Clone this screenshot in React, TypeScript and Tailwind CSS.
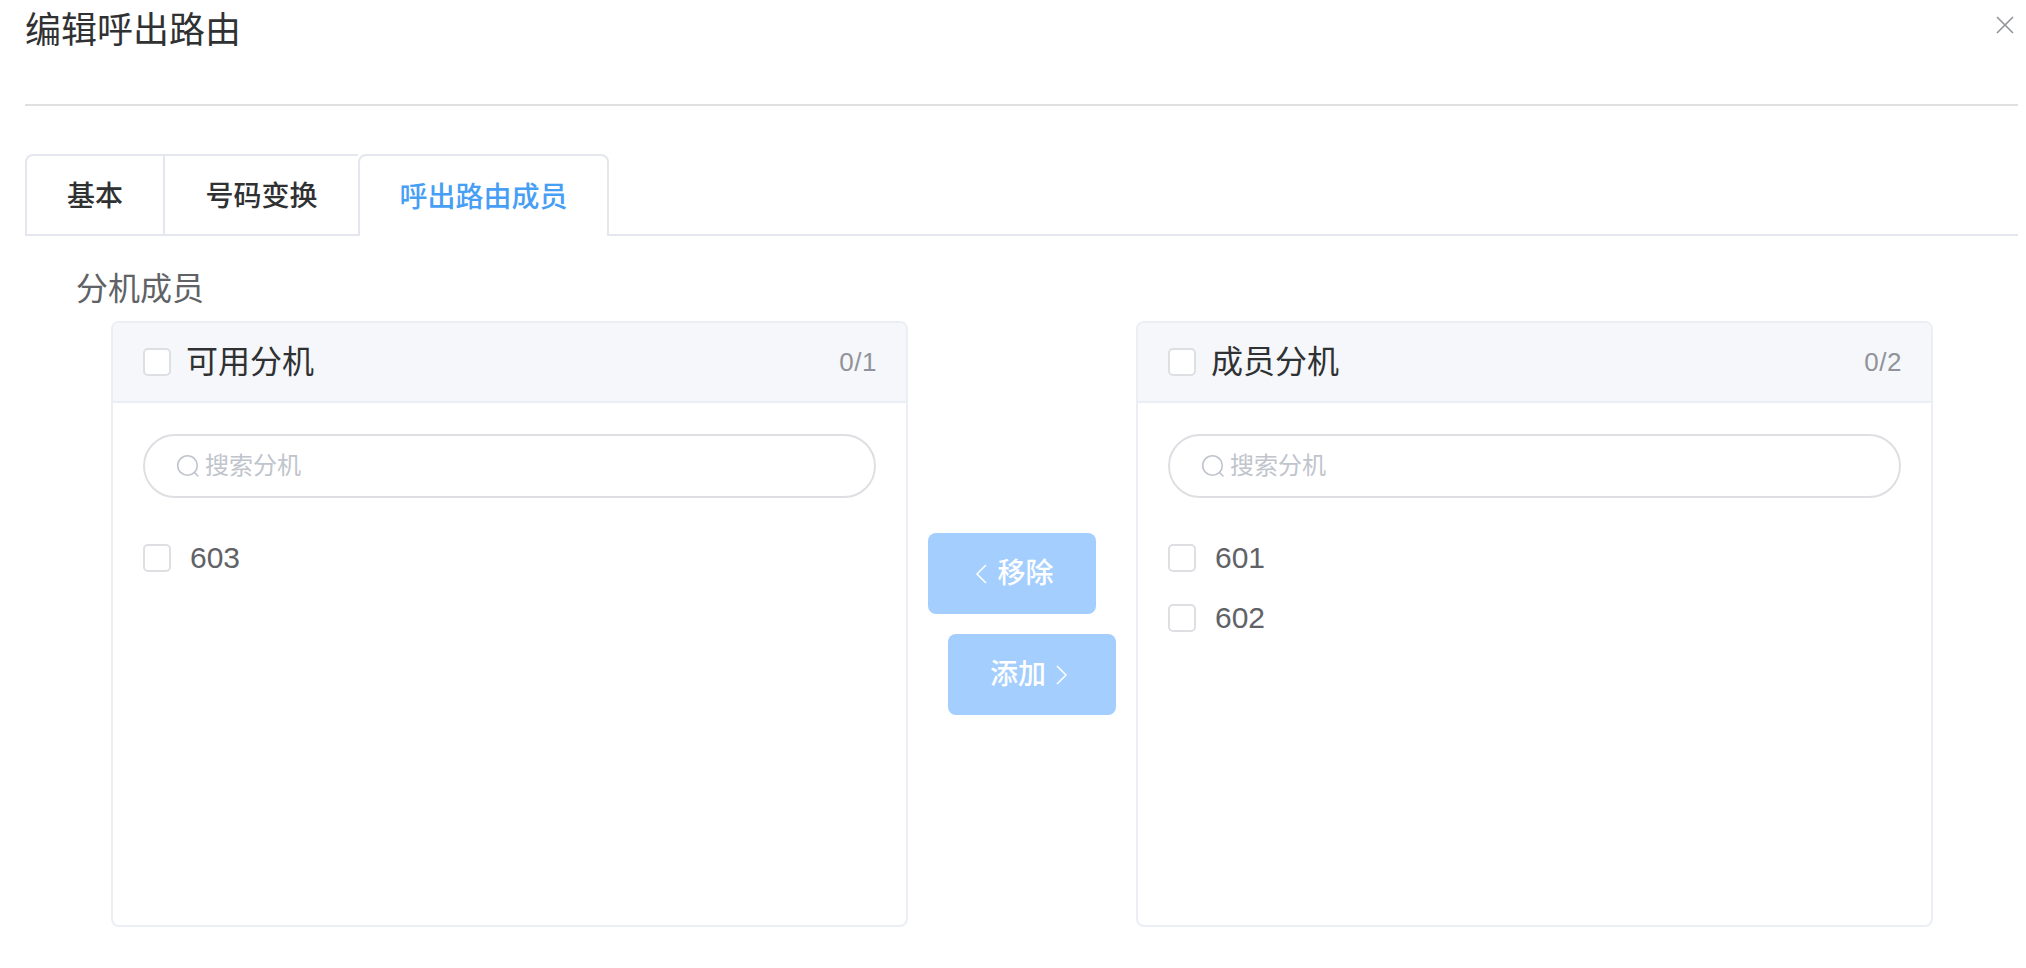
import React from "react";

const FONT = "[font-family:'Liberation_Sans','Noto_Sans_CJK_SC',sans-serif]";

function Box() {
  return <span className="block w-[28px] h-[28px] shrink-0 rounded-[5px] border-2 border-[#dddfe3] bg-white" />;
}

function SearchIcon() {
  return (
    <svg width="24" height="24" viewBox="0 0 24 24" fill="none" stroke="#c0c4cc" strokeWidth="1.6" className="shrink-0">
      <circle cx="11.5" cy="11.5" r="9.8" />
      <path d="M18.6 18.6 L22 22" strokeLinecap="round" />
    </svg>
  );
}

function Chevron({ dir }: { dir: "left" | "right" }) {
  return (
    <svg width="12" height="20" viewBox="0 0 12 20" fill="none" stroke="#ffffff" strokeWidth="1.5" className="shrink-0">
      <path d={dir === "left" ? "M11 1 L2 10 L11 19" : "M1 1 L10 10 L1 19"} />
    </svg>
  );
}

function Panel({ title, count, items }: { title: string; count: string; items: string[] }) {
  return (
    <div className="w-[797px] h-[606px] shrink-0 rounded-[8px] border-2 border-[#ebeef5] overflow-hidden bg-white">
      <div className="h-[80px] flex items-center px-[30px] bg-[#f5f7fa] border-b-2 border-[#ebeef5]">
        <Box />
        <span className="ml-[15px] text-[32px] leading-[40px] text-[#303133]">{title}</span>
        <span className="ml-auto -mr-[1px] text-[26px] leading-[32px] tracking-[0.5px] text-[#909399]">{count}</span>
      </div>
      <div className="px-[30px] pt-[31px]">
        <div className="h-[64px] rounded-full border-2 border-[#dddfe3] flex items-center pl-[31px] pr-[20px] gap-[5px]">
          <SearchIcon />
          <input
            readOnly
            placeholder="搜索分机"
            className="flex-1 min-w-0 text-[24px] leading-[32px] outline-none placeholder:text-[#c0c4cc] bg-transparent"
          />
        </div>
        <div className="mt-[30px] flex flex-col">
          {items.map((it) => (
            <div key={it} className="h-[60px] flex items-center gap-[19px]">
              <Box />
              <span className="text-[30px] leading-[40px] text-[#606266]">{it}</span>
            </div>
          ))}
        </div>
      </div>
    </div>
  );
}

export default function App() {
  return (
    <div className={`relative w-[2026px] h-[968px] overflow-hidden bg-white ${FONT}`}>
      <div className="ml-[25px] mr-[8px] h-[106px] border-b-2 border-[#e0e0e0]">
        <h1 className="pt-[7px] text-[36px] leading-[48px] font-normal text-[#303133]">编辑呼出路由</h1>
      </div>
      <svg width="18" height="18" viewBox="0 0 18 18" fill="none" stroke="#909399" strokeWidth="1.6" className="absolute left-[1996px] top-[16px]">
        <path d="M1 1 L17 17 M17 1 L1 17" />
      </svg>

      <div className="ml-[25px] mr-[8px] mt-[48px] h-[82px] flex border-b-2 border-[#e4e7ed]">
        <div className="w-[138px] h-[80px] pt-[3px] rounded-tl-[8px] border-l-2 border-t-2 border-[#e4e7ed] flex items-center justify-center text-[28px] font-medium text-[#303133]">基本</div>
        <div className="w-[195px] h-[80px] pt-[3px] border-l-2 border-t-2 border-[#e4e7ed] flex items-center justify-center text-[28px] font-medium text-[#303133]">号码变换</div>
        <div className="w-[251px] h-[82px] pt-[3px] rounded-t-[8px] border-x-2 border-t-2 border-[#e4e7ed] bg-white flex items-center justify-center text-[28px] font-medium text-[#479ef5]">呼出路由成员</div>
      </div>

      <div className="ml-[76px] mt-[31px] text-[32px] leading-[44px] text-[#606266]">分机成员</div>

      <div className="ml-[111px] mt-[10px] flex">
        <Panel title="可用分机" count="0/1" items={["603"]} />
        <div className="w-[228px] shrink-0 pl-[20px] pt-[212px] flex flex-col gap-[20px]">
          <div className="w-[168px] h-[81px] pl-[5px] rounded-[8px] bg-[#a3cefd] flex items-center justify-center gap-[10px] text-[28px] font-medium text-white">
            <Chevron dir="left" />
            <span>移除</span>
          </div>
          <div className="ml-[20px] w-[168px] h-[81px] pr-[6px] rounded-[8px] bg-[#a3cefd] flex items-center justify-center gap-[10px] text-[28px] font-medium text-white">
            <span>添加</span>
            <Chevron dir="right" />
          </div>
        </div>
        <Panel title="成员分机" count="0/2" items={["601", "602"]} />
      </div>
    </div>
  );
}
